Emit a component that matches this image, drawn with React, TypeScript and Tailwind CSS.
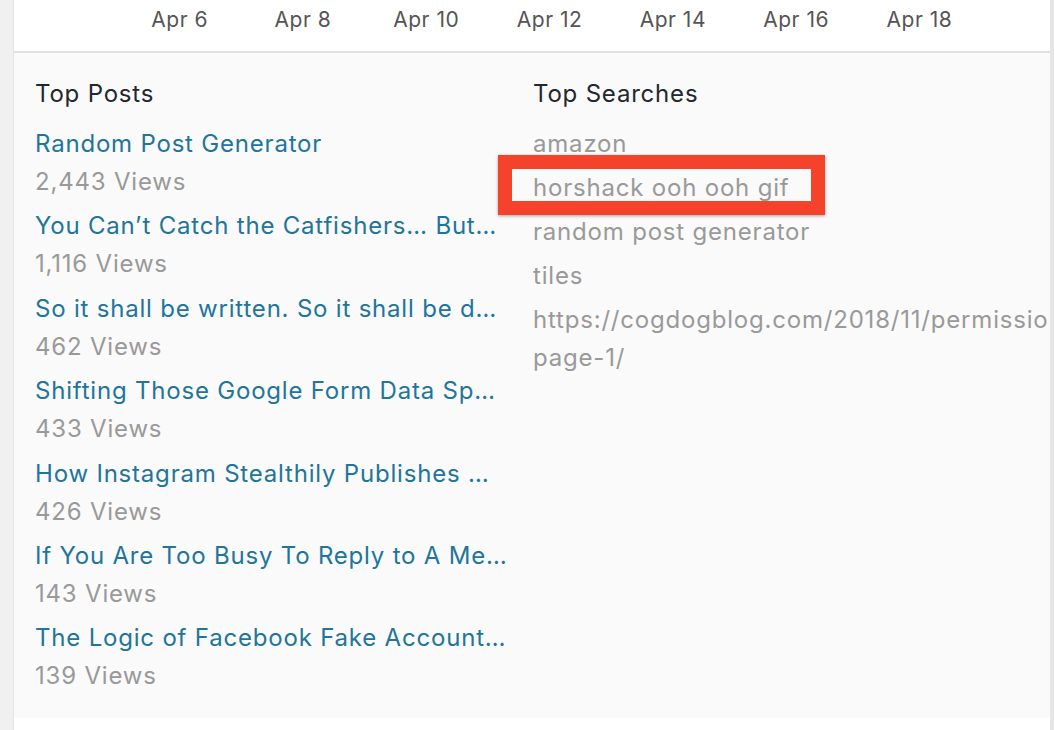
import React from "react";

const posts: [string, string][] = [
  ["Random Post Generator", "2,443 Views"],
  ["You Can\u2019t Catch the Catfishers\u2026 But\u2026", "1,116 Views"],
  ["So it shall be written. So it shall be d\u2026", "462 Views"],
  ["Shifting Those Google Form Data Sp\u2026", "433 Views"],
  ["How Instagram Stealthily Publishes \u2026", "426 Views"],
  ["If You Are Too Busy To Reply to A Me\u2026", "143 Views"],
  ["The Logic of Facebook Fake Account\u2026", "139 Views"],
];

const dates = ["Apr 6", "Apr 8", "Apr 10", "Apr 12", "Apr 14", "Apr 16", "Apr 18"];

export default function App() {
  return (
    <div className="relative w-[1054px] h-[730px] bg-[#f0f0f0] flex overflow-hidden font-['Inter',sans-serif]">
      <div className="ml-[13px] w-[1037px] bg-white border-l border-[#e4e4e4] overflow-hidden flex flex-col">
        <div className="h-[51px] flex items-start pl-[104px] pt-[7px] shrink-0">
          {dates.map((d) => (
            <div key={d} className="w-[123.3px] text-center text-[21px] leading-[26px] text-[#555] tracking-[0.5px]">
              {d}
            </div>
          ))}
        </div>
        <div className="border-t-2 border-[#e0e0e0] bg-[#fafafa] h-[667px] shrink-0 flex pt-[22px] tracking-[0.8px]">
          <div className="w-[519px] pl-[21px] shrink-0">
            <div className="text-[24px] leading-[38px] text-[#23282d] mb-[12px]">Top Posts</div>
            {posts.map(([t, v]) => (
              <div key={t} className="mb-[6.4px]">
                <div className="text-[24px] leading-[38px] text-[#21759b] whitespace-nowrap">{t}</div>
                <div className="text-[24px] leading-[38px] text-[#999]">{v}</div>
              </div>
            ))}
          </div>
          <div className="flex-1 min-w-0">
            <div className="text-[24px] leading-[38px] text-[#23282d] mb-[12px]">Top Searches</div>
            {["amazon", "horshack ooh ooh gif", "random post generator", "tiles"].map((s) => (
              <div key={s} className="text-[24px] leading-[38px] text-[#999] mb-[6px] whitespace-nowrap">
                {s}
              </div>
            ))}
            <div className="text-[24px] leading-[38px] text-[#999] mt-[2px]">
              <div className="whitespace-nowrap">https://cogdogblog.com/2018/11/permission-</div>
              <div>page-1/</div>
            </div>
          </div>
        </div>
      </div>
      <div className="w-[4px] bg-[#e6e6e6]" />
      <div className="absolute left-[498px] top-[155px] w-[327px] h-[60px] border-[14px] border-[#f4432a] shadow-[0_1px_3px_rgba(0,0,0,0.35)]" />
    </div>
  );
}
